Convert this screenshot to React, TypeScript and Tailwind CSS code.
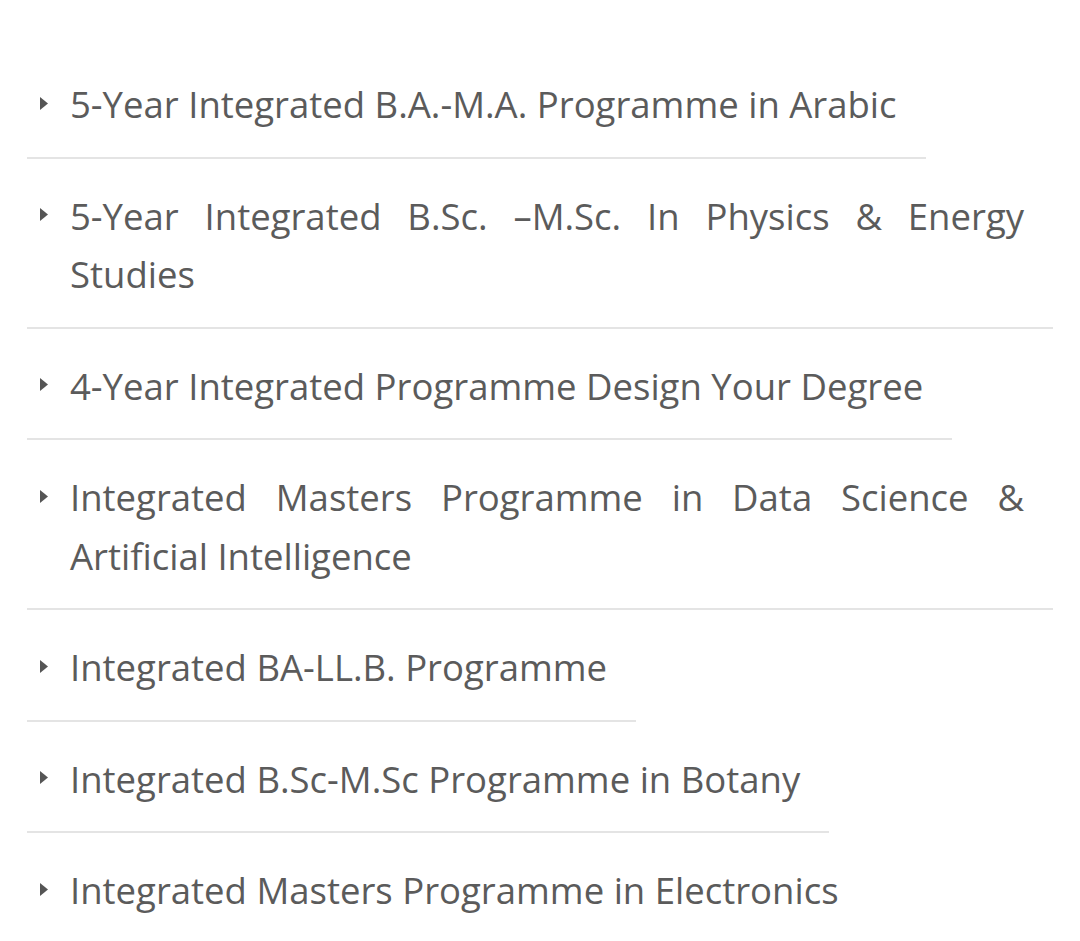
const ITEMS = [
  "5-Year Integrated B.A.-M.A. Programme in Arabic",
  "5-Year Integrated B.Sc. –M.Sc. In Physics & Energy Studies",
  "4-Year Integrated Programme Design Your Degree",
  "Integrated Masters Programme in Data Science & Artificial Intelligence",
  "Integrated BA-LL.B. Programme",
  "Integrated B.Sc-M.Sc Programme in Botany",
  "Integrated Masters Programme in Electronics",
];

function Caret() {
  return (
    <svg width="8" height="13" viewBox="0 0 8 13" className="flex-shrink-0">
      <path d="M0 0 L8 6.5 L0 13 Z" fill="#555555" />
    </svg>
  );
}

export default function App() {
  return (
    <div
      className="min-h-screen bg-white pt-[47px]"
      style={{ fontFamily: '"Open Sans", sans-serif' }}
    >
      <ul className="flex flex-col items-start">
        {ITEMS.map((item) => (
          <li
            key={item}
            className="ml-[27px] w-fit max-w-[1026px] flex pl-[13px] pr-[29px] pt-[28px] pb-[23px] border-b-2 border-[#e4e4e4]"
          >
            <div className="h-[56px] flex items-center mr-[22px]">
              <Caret />
            </div>
            <p className="text-[36.5px] leading-[58.5px] text-[#5b5b5b] text-justify">
              {item}
            </p>
          </li>
        ))}
      </ul>
    </div>
  );
}
